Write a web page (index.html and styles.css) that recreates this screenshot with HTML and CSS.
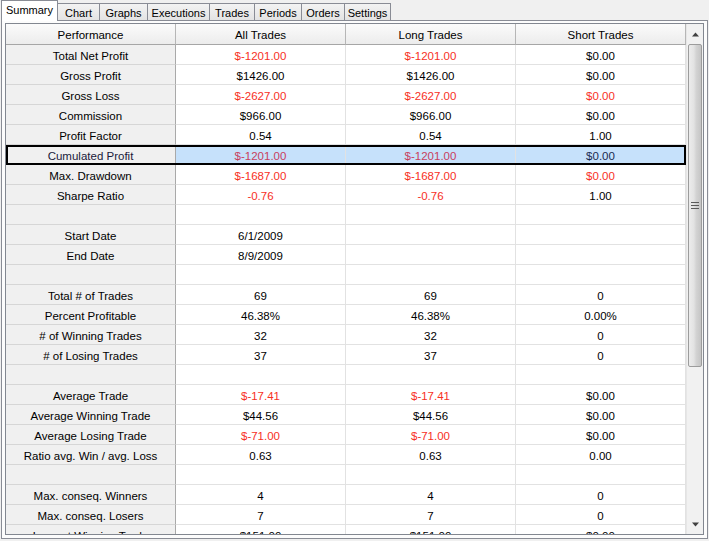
FILE: index.html
```html
<!DOCTYPE html>
<html>
<head>
<meta charset="utf-8">
<link rel="stylesheet" href="styles.css">
</head>
<body>
<div class="tabs">
  <div class="tab active">Summary</div>
  <div class="tab w42">Chart</div>
  <div class="tab w48">Graphs</div>
  <div class="tab w62">Executions</div>
  <div class="tab w45">Trades</div>
  <div class="tab w47">Periods</div>
  <div class="tab w43">Orders</div>
  <div class="tab w46">Settings</div>
</div>
<div class="panel">
  <div class="gridbox">
    <div class="grid">
      <div class="row head"><div class="c">Performance</div><div class="c">All Trades</div><div class="c">Long Trades</div><div class="c">Short Trades</div></div>
      <div class="row"><div class="c">Total Net Profit</div><div class="c neg">$-1201.00</div><div class="c neg">$-1201.00</div><div class="c">$0.00</div></div>
      <div class="row"><div class="c">Gross Profit</div><div class="c">$1426.00</div><div class="c">$1426.00</div><div class="c">$0.00</div></div>
      <div class="row"><div class="c">Gross Loss</div><div class="c neg">$-2627.00</div><div class="c neg">$-2627.00</div><div class="c neg">$0.00</div></div>
      <div class="row"><div class="c">Commission</div><div class="c">$966.00</div><div class="c">$966.00</div><div class="c">$0.00</div></div>
      <div class="row"><div class="c">Profit Factor</div><div class="c">0.54</div><div class="c">0.54</div><div class="c">1.00</div></div>
      <div class="row sel"><div class="c">Cumulated Profit</div><div class="c neg">$-1201.00</div><div class="c neg">$-1201.00</div><div class="c">$0.00</div></div>
      <div class="row"><div class="c">Max. Drawdown</div><div class="c neg">$-1687.00</div><div class="c neg">$-1687.00</div><div class="c neg">$0.00</div></div>
      <div class="row"><div class="c">Sharpe Ratio</div><div class="c neg">-0.76</div><div class="c neg">-0.76</div><div class="c">1.00</div></div>
      <div class="row"><div class="c"></div><div class="c"></div><div class="c"></div><div class="c"></div></div>
      <div class="row"><div class="c">Start Date</div><div class="c">6/1/2009</div><div class="c"></div><div class="c"></div></div>
      <div class="row"><div class="c">End Date</div><div class="c">8/9/2009</div><div class="c"></div><div class="c"></div></div>
      <div class="row"><div class="c"></div><div class="c"></div><div class="c"></div><div class="c"></div></div>
      <div class="row"><div class="c">Total # of Trades</div><div class="c">69</div><div class="c">69</div><div class="c">0</div></div>
      <div class="row"><div class="c">Percent Profitable</div><div class="c">46.38%</div><div class="c">46.38%</div><div class="c">0.00%</div></div>
      <div class="row"><div class="c"># of Winning Trades</div><div class="c">32</div><div class="c">32</div><div class="c">0</div></div>
      <div class="row"><div class="c"># of Losing Trades</div><div class="c">37</div><div class="c">37</div><div class="c">0</div></div>
      <div class="row"><div class="c"></div><div class="c"></div><div class="c"></div><div class="c"></div></div>
      <div class="row"><div class="c">Average Trade</div><div class="c neg">$-17.41</div><div class="c neg">$-17.41</div><div class="c">$0.00</div></div>
      <div class="row"><div class="c">Average Winning Trade</div><div class="c">$44.56</div><div class="c">$44.56</div><div class="c">$0.00</div></div>
      <div class="row"><div class="c">Average Losing Trade</div><div class="c neg">$-71.00</div><div class="c neg">$-71.00</div><div class="c">$0.00</div></div>
      <div class="row"><div class="c">Ratio avg. Win / avg. Loss</div><div class="c">0.63</div><div class="c">0.63</div><div class="c">0.00</div></div>
      <div class="row"><div class="c"></div><div class="c"></div><div class="c"></div><div class="c"></div></div>
      <div class="row"><div class="c">Max. conseq. Winners</div><div class="c">4</div><div class="c">4</div><div class="c">0</div></div>
      <div class="row"><div class="c">Max. conseq. Losers</div><div class="c">7</div><div class="c">7</div><div class="c">0</div></div>
      <div class="row"><div class="c">Largest Winning Trade</div><div class="c">$151.00</div><div class="c">$151.00</div><div class="c">$0.00</div></div>
    </div>
    <div class="scrollbar">
      <div class="arrow">
        <svg width="9" height="5" viewBox="0 0 9 5"><path d="M4.5 0.5 L8 4.5 L1 4.5 Z" fill="#404040"/></svg>
      </div>
      <div class="thumb">
        <svg width="8" height="7" viewBox="0 0 8 7"><path d="M0 0.5H8M0 3.5H8M0 6.5H8" stroke="#5a5a5a" stroke-width="1"/></svg>
      </div>
      <div class="track"></div>
      <div class="arrow">
        <svg width="9" height="5" viewBox="0 0 9 5"><path d="M1 0.5 L8 0.5 L4.5 4.5 Z" fill="#404040"/></svg>
      </div>
    </div>
  </div>
</div>
</body>
</html>
```
FILE: styles.css
```css
html, body {
  margin: 0;
  padding: 0;
}
body {
  background: #f0f0f0;
  font-family: "Liberation Sans", Arial, sans-serif;
  font-size: 11.5px;
  color: #000;
  width: 709px;
  height: 541px;
  overflow: hidden;
}
.tabs {
  display: flex;
  height: 20px;
  padding-left: 1px;
  align-items: flex-end;
  position: relative;
  z-index: 2;
  font-size: 11px;
}
.tab {
  box-sizing: border-box;
  height: 17px;
  border: 1px solid #898c95;
  border-bottom: none;
  border-left: none;
  background: linear-gradient(#f3f3f3, #e3e3e3);
  display: flex;
  align-items: center;
  justify-content: center;
  padding-top: 1px;
  white-space: nowrap;
}
.tab.active {
  width: 57px;
  height: 21px;
  margin-bottom: -1px;
  background: #fff;
  border-left: 1px solid #898c95;
  padding-top: 0;
  padding-bottom: 2px;
}
.w42 { width: 42px; }
.w48 { width: 48px; }
.w62 { width: 62px; }
.w45 { width: 45px; }
.w47 { width: 47px; }
.w43 { width: 43px; }
.w46 { width: 46px; }
.panel {
  box-sizing: border-box;
  margin-left: 1px;
  width: 707px;
  height: 519px;
  border: 1px solid #898c95;
  background: #fcfcfc;
  padding: 2px 2px 0 3px;
  position: relative;
  z-index: 1;
}
.gridbox {
  box-sizing: border-box;
  width: 699px;
  height: 512px;
  border: 1px solid #828790;
  background: #fff;
  display: flex;
  overflow: hidden;
}
.grid {
  width: 680px;
  display: flex;
  flex-direction: column;
}
.row {
  display: flex;
  height: 20px;
  flex: none;
  position: relative;
}
.c {
  box-sizing: border-box;
  width: 170px;
  height: 20px;
  border-right: 1px solid #e2e2e2;
  border-bottom: 1px solid #e2e2e2;
  display: flex;
  align-items: center;
  justify-content: center;
  white-space: nowrap;
  padding-top: 2px;
}
.c:first-child {
  background: #f0f0f0;
  border-right: 1px solid #a9a9a9;
  border-bottom: 1px solid #d6d6d6;
}
.head {
  height: 21px;
}
.head .c {
  height: 21px;
  background: linear-gradient(#fbfbfb, #ececec);
  border-right: 1px solid #b6b6b6;
  border-bottom: 1px solid #a6a6a6;
}
.neg { color: #f7301e; }
.sel .c { background: #c6e1fb; color: #1a2a50; }
.sel .c:first-child { background: #f0f0f0; color: #1a1a3a; }
.sel .c.neg { color: #c8405e; }
.sel::after {
  content: "";
  position: absolute;
  left: 0;
  top: 0;
  right: 0;
  bottom: 0;
  border: 2px solid #000;
  pointer-events: none;
}
.scrollbar {
  box-sizing: border-box;
  width: 17px;
  display: flex;
  flex-direction: column;
  background: #f1f1f1;
  border-left: 1px solid #e6e6e6;
}
.arrow {
  height: 20px;
  display: flex;
  align-items: center;
  justify-content: center;
  flex: none;
}
.thumb {
  box-sizing: border-box;
  height: 323px;
  margin: 0 1px;
  border: 1px solid #9c9c9c;
  border-radius: 2px;
  background: linear-gradient(to right, #ececec, #e3e3e3 40%, #d3d3d3 60%, #c5c5c5);
  display: flex;
  align-items: center;
  justify-content: center;
  flex: none;
}
.track { flex: 1; }
```
